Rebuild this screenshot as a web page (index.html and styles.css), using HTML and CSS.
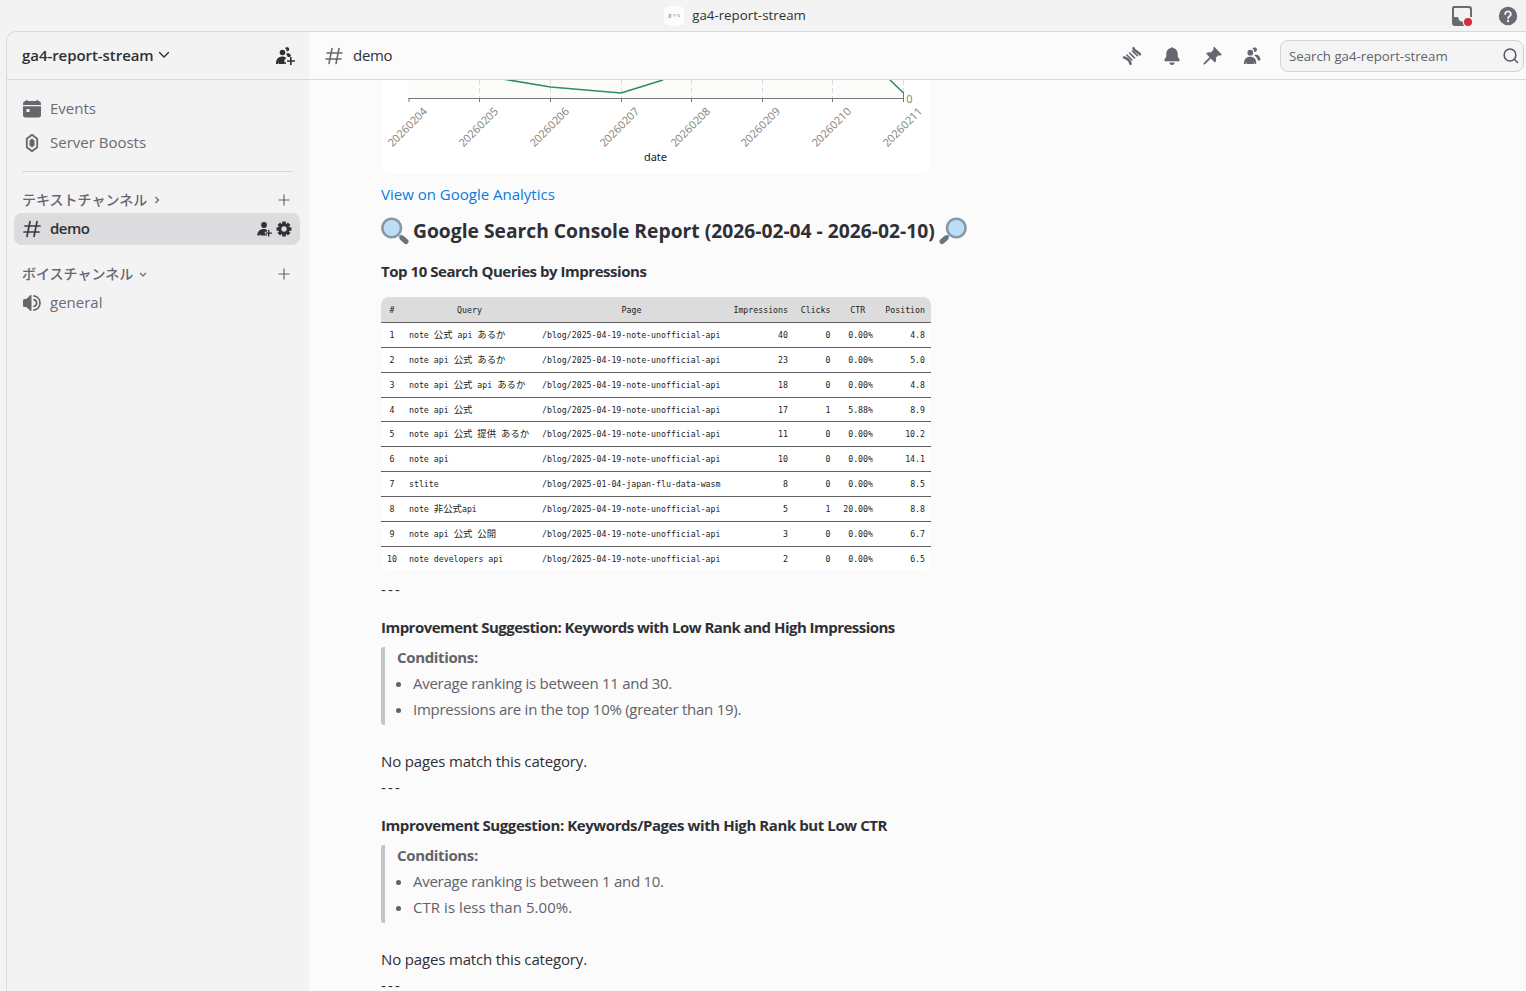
FILE: index.html
```html
<!DOCTYPE html>
<html lang="en">
<head>
  <meta charset="UTF-8">
  <meta name="viewport" content="width=device-width, initial-scale=1.0">
  <title>#demo | ga4-report-stream</title>
  <link rel="stylesheet" href="styles.css">
</head>
<body>
  <header class="titlebar">
    <div class="titlebar-name">
      <span class="guild-icon"><i>g</i>·<i>r</i>·<i>s</i></span>
      <span class="titlebar-text">ga4-report-stream</span>
    </div>
    <div class="titlebar-actions">
      <svg width="22" height="22" viewBox="0 0 22 22">
        <path d="M3 1h15a3 3 0 0 1 3 3v8h-2V4.500a1.500 1.500 0 0 0-1.500-1.500h-14a.5.5 0 0 0-.5.5V12h3.500a1 1 0 0 1 1 1c0 2 1.500 3.500 3.600 3.500.8 0 .9.600.9 1.200 0 1.300.400 2.300 1.100 3.300H4a3 3 0 0 1-3-3V3a2 2 0 0 1 2-2z" fill="#6a6a74"/>
        <circle cx="17" cy="17" r="4" fill="#d22d39"/>
      </svg>
      <svg width="20" height="20" viewBox="0 0 20 20">
        <circle cx="10" cy="10" r="9.200" fill="#6a6a74"/>
        <path d="M7.200 8a2.800 2.600 0 1 1 4.300 2.200c-.9.600-1.400 1-1.400 1.900" fill="none" stroke="#f3f3f3" stroke-width="1.900" stroke-linecap="round"/>
        <circle cx="10" cy="15" r="1.200" fill="#f3f3f3"/>
      </svg>
    </div>
  </header>

  <div class="app">
    <nav class="sidebar">
      <div class="guild-header">
        <span class="guild-name">ga4-report-stream</span>
        <svg class="guild-chevron" width="12" height="8" viewBox="0 0 12 8"><path d="M1.500 1.500 6 6l4.500-4.500" fill="none" stroke="#2f3035" stroke-width="1.400" stroke-linecap="round"/></svg>
        <svg class="guild-invite" width="20" height="20" viewBox="0 0 20 20" fill="#2f3035">
          <circle cx="7.500" cy="6.500" r="2.800"/>
          <path d="M1 17.500c0-4 2.200-7 6.200-7 1.600 0 2.700.4 3.600 1.200L11 13.200H9.500v3H11V18H9.500l-.3-1.500-.3 1.500H4l-.3-1.800-.6 1.800H1.500a.5.5 0 0 1-.5-.5z"/>
          <path d="M10 2.200c.8-1.400 4.200-1.700 4.200 1 0 1.600-1.400 2.400-2.600 2.100.2-1.200-.2-2.300-1.600-3.100zM11.200 8.300c.2-1 3.600-2 4.800 1.500l-1 1.200h-2.200c-.4-1-1-1.800-1.600-2.700z"/>
          <path d="M15 11h1.600v3.200H20v1.600h-3.400V19H15v-3.200h-3v-1.600h3z"/>
        </svg>
      </div>

      <div class="channel">
        <svg width="20" height="20" viewBox="0 0 20 20" fill="#66666f">
          <path d="M1 6V5a3 3 0 0 1 3-3V1.500a.8.8 0 0 1 1.600 0V2h8.800v-.5a.8.8 0 0 1 1.600 0V2a3 3 0 0 1 3 3v1z"/>
          <path fill-rule="evenodd" d="M1 7.200h18V16a2.500 2.500 0 0 1-2.500 2.500h-13A2.500 2.500 0 0 1 1 16zM4.500 10v3h3v-3z"/>
        </svg>
        <span>Events</span>
      </div>
      <div class="channel">
        <svg width="20" height="20" viewBox="0 0 20 20">
          <path d="m10 1.800 5.200 4v8.400l-5.200 4-5.200-4V5.800z" fill="none" stroke="#66666f" stroke-width="1.800" stroke-linejoin="round"/>
          <path d="m10 5.400 2.500 2v5.200l-2.500 2-2.500-2V7.400z" fill="#66666f"/>
        </svg>
        <span>Server Boosts</span>
      </div>

      <div class="divider"></div>

      <div class="category">
        <span>テキストチャンネル</span>
        <svg width="8" height="10" viewBox="0 0 8 10"><path d="M2.500 2 5.500 5l-3 3" fill="none" stroke="#66666f" stroke-width="1.200"/></svg>
        <svg class="add" width="12" height="12" viewBox="0 0 12 12"><path d="M6 .5v11M.5 6h11" stroke="#66666f" stroke-width="1.200"/></svg>
      </div>
      <div class="channel selected">
        <svg width="20" height="20" viewBox="0 0 20 20"><path d="M8 2.500 5 17.500M15 2.500l-3 15M3 7h15M2 13h15" fill="none" stroke="#3a3a40" stroke-width="1.700" stroke-linecap="round"/></svg>
        <span>demo</span>
        <div class="channel-actions">
          <svg width="16" height="16" viewBox="0 0 16 16" fill="#2f3035">
            <circle cx="8" cy="4" r="2.900"/>
            <path d="M1.300 14.500C1.300 10.500 4 8 8 8c1.200 0 2.200.2 3 .700v2.100H8.800v2.400H11v1.300H4.500l-.4-1.800-.6 1.800z"/>
            <path d="M12 9h1.400v2.500H16v1.300h-2.600v2.600H12v-2.600H9.500v-1.300H12z"/>
          </svg>
          <svg width="16" height="16" viewBox="0 0 16 16">
            <circle cx="8" cy="8" r="4.200" fill="none" stroke="#2f3035" stroke-width="3"/>
            <g stroke="#2f3035" stroke-width="3.600"><path d="M8 .6v2.500M8 12.900v2.500M.6 8h2.500M12.900 8h2.500M2.800 2.800l1.700 1.700M11.500 11.500l1.700 1.700M2.800 13.200l1.700-1.700M11.500 4.500l1.700-1.700"/></g>
          </svg>
        </div>
      </div>

      <div class="category voice">
        <span>ボイスチャンネル</span>
        <svg width="8" height="10" viewBox="0 0 8 10"><path d="M1 4l3 3 3-3" fill="none" stroke="#66666f" stroke-width="1.200"/></svg>
        <svg class="add" width="12" height="12" viewBox="0 0 12 12"><path d="M6 .5v11M.5 6h11" stroke="#66666f" stroke-width="1.200"/></svg>
      </div>
      <div class="channel">
        <svg width="20" height="20" viewBox="0 0 20 20">
          <path d="M9.500 2.500v15a.6.600 0 0 1-1 .4L4.300 14H2.500A1.500 1.500 0 0 1 1 12.500v-5A1.500 1.500 0 0 1 2.500 6h1.800l4.200-3.900a.6.600 0 0 1 1 .4z" fill="#66666f"/>
          <path d="M12 2.900a7.200 7.200 0 0 1 0 14.200M12 6.600a3.500 3.500 0 0 1 0 6.800" fill="none" stroke="#66666f" stroke-width="1.700" stroke-linecap="round"/>
        </svg>
        <span>general</span>
      </div>
    </nav>

    <main class="chat">
      <div class="chat-header">
        <svg width="20" height="20" viewBox="0 0 20 20"><path d="M8 2.500 5 17.500M15 2.500l-3 15M3 7h15M2 13h15" fill="none" stroke="#66666f" stroke-width="1.500" stroke-linecap="round"/></svg>
        <span class="chat-title">demo</span>
        <div class="toolbar">
          <!-- threads -->
          <svg width="20" height="20" viewBox="0 0 20 20" fill="none" stroke="#66666f" stroke-linecap="round">
            <path d="M11.500 2.200c.3 1.500 1 2 2.300 2.900 1.500 1 2.700 1.600 4.200 3.200M2 11.500c1.700.2 2.700 1.100 4 2 1.400 1 2.200 2 2.500 4.300" stroke-width="2.600"/>
            <path d="M10.300 5l5 4.600M7.500 7l5 4.900M4.800 9l5 4.900" stroke-width="1.600"/>
          </svg>
          <!-- notifications -->
          <svg width="20" height="20" viewBox="0 0 20 20" fill="#66666f">
            <path d="M10 1.200c.6 0 1 .4 1.200.9 2.800.6 4.500 2.800 4.500 5.700v2.400c0 1.600 2 2.600 2 4 0 .6-.5 1-1.200 1h-13c-.7 0-1.200-.4-1.200-1 0-1.400 2-2.400 2-4V7.800c0-2.900 1.700-5.100 4.500-5.700.2-.5.600-.9 1.200-.9zM7.400 16.500h5.200a2.600 2.400 0 0 1-5.200 0z"/>
          </svg>
          <!-- pinned -->
          <svg width="20" height="20" viewBox="0 0 20 20" fill="#66666f">
            <path d="m12.300.8 7.400 7.700-.7.900c-1.100.2-1.900.1-2.600-.2l-2.600 2.600c.6 2 .3 3.500-.8 4.700l-4.300-4.100-5.100 5.400-1.600.9-.6-.6.800-1.600 5.300-5.200-3.400-3.900c1.500-1.200 3-1.500 4.700-1l2.700-2.600c-.3-1-.1-2 .2-2.700z"/>
          </svg>
          <!-- members -->
          <svg width="20" height="20" viewBox="0 0 20 20" fill="#66666f">
            <circle cx="8.300" cy="6.700" r="2.900"/>
            <path d="M2 17.500C2 13.300 4.300 10.700 8.300 10.700s6 2.600 6 6.800c0 .3-.2.5-.5.5h-.7l-.6-2-.3 2H4.600l-.4-2-.6 2h-1a.5.5 0 0 1-.6-.5zM10.400 2.600c.8-1.600 4.600-1.800 4.600 1 0 1.900-1.500 2.600-2.900 2.300.2-1.400-.4-2.500-1.700-3.300zM12.200 9.300c3.500-1.500 6.200.9 6.200 4.500 0 .4-.2.700-.6.700h-1.900c-.6-2.400-2-3.800-3.700-5.200z"/>
          </svg>
        </div>
        <div class="search">
          <span>Search ga4-report-stream</span>
          <svg width="18" height="18" viewBox="0 0 18 18" fill="none" stroke="#55555e" stroke-width="1.500" stroke-linecap="round"><circle cx="8" cy="8" r="5.900"/><path d="m12.300 12.300 3.200 3.200"/></svg>
        </div>
      </div>

      <div class="messages">
        <svg class="chart" width="550" height="94" viewBox="0 0 550 94">
          <path d="M28 0h494v18.500H28z" fill="#fcfdfb"/>
          <g class="grid-lines"><path d="M98.500 0v18M169.500 0v18M240.500 0v18M310.500 0v18M381.500 0v18M451.500 0v18M522.500 0v18"/></g>
          <path d="M98-5 169.500 7 240 13 282 0 M509 0 522.500 13" fill="none" stroke="#2f8c63" stroke-width="1.600" stroke-linejoin="round"/>
          <path d="M27.500 18.500h495M28 18v4M98.500 18v4M169.500 18v4M240.500 18v4M310.500 18v4M381.500 18v4M451.500 18v4M522.500 12v10" stroke="#777" fill="none"/>
          <g class="ticks">
            <text transform="translate(47 32) rotate(-45)">20260204</text>
            <text transform="translate(118 32) rotate(-45)">20260205</text>
            <text transform="translate(189 32) rotate(-45)">20260206</text>
            <text transform="translate(259 32) rotate(-45)">20260207</text>
            <text transform="translate(330 32) rotate(-45)">20260208</text>
            <text transform="translate(400 32) rotate(-45)">20260209</text>
            <text transform="translate(471 32) rotate(-45)">20260210</text>
            <text transform="translate(542 32) rotate(-45)">20260211</text>
            <text x="531.500" y="23">0</text>
          </g>
          <text class="axis-title" x="274.500" y="81">date</text>
        </svg>

        <p class="link"><a href="#">View on Google Analytics</a></p>

        <h2>
          <svg width="28" height="28" viewBox="0 0 28 28"><path d="m18.500 18.500 2 2" stroke="#8899a6" stroke-width="3"/><path d="m21 21 4 3.500" stroke="#66757f" stroke-width="5" stroke-linecap="round"/><circle cx="10.700" cy="11" r="9.300" fill="#bbddf5" stroke="#8899a6" stroke-width="2.600"/></svg>
          <span>Google Search Console Report (2026-02-04 - 2026-02-10)</span>
          <svg width="28" height="28" viewBox="0 0 28 28"><path d="m9.500 18.500-2 2" stroke="#8899a6" stroke-width="3"/><path d="m7 21-4 3.500" stroke="#66757f" stroke-width="5" stroke-linecap="round"/><circle cx="17.300" cy="11" r="9.300" fill="#bbddf5" stroke="#8899a6" stroke-width="2.600"/></svg>
        </h2>

        <h3 class="top-queries">Top 10 Search Queries by Impressions</h3>

        <div class="report">
          <div class="row head"><span>#</span><span>Query</span><span>Page</span><span>Impressions</span><span>Clicks</span><span>CTR</span><span>Position</span></div>
          <div class="row"><span>1</span><span>note <b>公式</b> api <b>あるか</b></span><span>/blog/2025-04-19-note-unofficial-api</span><span>40</span><span>0</span><span>0.00%</span><span>4.8</span></div>
          <div class="row"><span>2</span><span>note api <b>公式</b> <b>あるか</b></span><span>/blog/2025-04-19-note-unofficial-api</span><span>23</span><span>0</span><span>0.00%</span><span>5.0</span></div>
          <div class="row"><span>3</span><span>note api <b>公式</b> api <b>あるか</b></span><span>/blog/2025-04-19-note-unofficial-api</span><span>18</span><span>0</span><span>0.00%</span><span>4.8</span></div>
          <div class="row"><span>4</span><span>note api <b>公式</b></span><span>/blog/2025-04-19-note-unofficial-api</span><span>17</span><span>1</span><span>5.88%</span><span>8.9</span></div>
          <div class="row"><span>5</span><span>note api <b>公式</b> <b>提供</b> <b>あるか</b></span><span>/blog/2025-04-19-note-unofficial-api</span><span>11</span><span>0</span><span>0.00%</span><span>10.2</span></div>
          <div class="row"><span>6</span><span>note api</span><span>/blog/2025-04-19-note-unofficial-api</span><span>10</span><span>0</span><span>0.00%</span><span>14.1</span></div>
          <div class="row"><span>7</span><span>stlite</span><span>/blog/2025-01-04-japan-flu-data-wasm</span><span>8</span><span>0</span><span>0.00%</span><span>8.5</span></div>
          <div class="row"><span>8</span><span>note <b>非公式</b>api</span><span>/blog/2025-04-19-note-unofficial-api</span><span>5</span><span>1</span><span>20.00%</span><span>8.8</span></div>
          <div class="row"><span>9</span><span>note api <b>公式</b> <b>公開</b></span><span>/blog/2025-04-19-note-unofficial-api</span><span>3</span><span>0</span><span>0.00%</span><span>6.7</span></div>
          <div class="row"><span>10</span><span>note developers api</span><span>/blog/2025-04-19-note-unofficial-api</span><span>2</span><span>0</span><span>0.00%</span><span>6.5</span></div>
        </div>

        <p class="dashes">---</p>
        <h3>Improvement Suggestion: Keywords with Low Rank and High Impressions</h3>
        <blockquote>
          <strong>Conditions:</strong>
          <ul>
            <li>Average ranking is between 11 and 30.</li>
            <li>Impressions are in the top 10% (greater than 19).</li>
          </ul>
        </blockquote>
        <p>No pages match this category.</p>
        <p class="dashes">---</p>
        <h3 class="low-ctr">Improvement Suggestion: Keywords/Pages with High Rank but Low CTR</h3>
        <blockquote>
          <strong>Conditions:</strong>
          <ul>
            <li>Average ranking is between 1 and 10.</li>
            <li class="ctr-limit">CTR is less than 5.00%.</li>
          </ul>
        </blockquote>
        <p>No pages match this category.</p>
        <p class="dashes">---</p>
      </div>
    </main>
  </div>
</body>
</html>
```
FILE: styles.css
```css
* {
  box-sizing: border-box;
}
body {
  margin: 0;
  height: 100vh;
  overflow: hidden;
  display: flex;
  flex-direction: column;
  background: #f3f3f3;
  color: #2f3035;
  font-family: "Open Sans", "Noto Sans CJK JP", sans-serif;
  font-size: 15px;
}
svg {
  display: block;
  flex: none;
}

/* Title bar */
.titlebar {
  height: 31px;
  flex: none;
  display: grid;
  grid-template-columns: 1fr auto 1fr;
  align-items: center;
  padding: 0 8px 0 0;
}
.titlebar-name {
  grid-column: 2;
  display: flex;
  align-items: center;
  gap: 8px;
  margin-left: -48px;
}
.guild-icon {
  width: 20px;
  height: 20px;
  border-radius: 5px;
  background: #fcfcfc;
  color: #888;
  font-size: 6px;
  line-height: 19px;
  text-align: center;
}
.guild-icon i {
  font-style: normal;
}
.titlebar-text {
  padding-bottom: 2px;
  font-size: 13.3px;
  font-weight: 500;
}
.titlebar-actions {
  justify-self: end;
  display: flex;
  align-items: center;
  gap: 25px;
}

.app {
  flex: 1;
  min-height: 0;
  margin-left: 6px;
  display: flex;
  border: 1px solid #d9d9da;
  border-width: 1px 0 0 1px;
  border-radius: 10px 0 0 0;
  overflow: hidden;
}

/* Sidebar */
.sidebar {
  width: 302px;
  flex: none;
}
.guild-header {
  height: 48px;
  display: flex;
  align-items: center;
  padding: 0 14px 0 15px;
  border-bottom: 1px solid #d9d9da;
  margin-bottom: 13px;
}
.guild-name {
  padding-bottom: 2px;
  font-weight: 600;
  letter-spacing: -0.06px;
}
.guild-chevron {
  margin: 0 0 2px 4px;
}
.guild-invite {
  margin-left: auto;
}
.channel {
  height: 32px;
  margin: 0 9px 2px 7px;
  padding: 0 8px;
  display: flex;
  align-items: center;
  gap: 8px;
  border-radius: 8px;
  color: #6b6b75;
  font-weight: 500;
}
.channel span {
  padding-bottom: 2px;
}
.channel.selected {
  background: #dcdcdf;
  color: #2f3035;
  font-weight: 600;
  letter-spacing: -0.5px;
  margin-bottom: 0;
}
.channel-actions {
  display: flex;
  gap: 4px;
  margin-left: auto;
}
.divider {
  height: 1px;
  margin: 12px 16px 15px 15px;
  background: #d9d9da;
}
.category {
  display: flex;
  align-items: center;
  height: 26px;
  padding: 0 19px 0 15px;
  gap: 6px;
  color: #66666f;
  font-size: 14px;
  font-weight: 500;
}
.category span {
  padding-bottom: 2px;
}
.category .add {
  margin-left: auto;
}
.category.voice {
  margin-top: 16px;
}

/* Chat */
.chat {
  flex: 1;
  min-width: 0;
  display: flex;
  flex-direction: column;
  background: #fbfbfb;
}
.chat-header {
  height: 48px;
  flex: none;
  display: flex;
  align-items: center;
  padding: 0 2px 0 15px;
  border-bottom: 1px solid #d9d9da;
}
.chat-title {
  margin-left: 9px;
  padding-bottom: 2px;
  font-weight: 500;
  letter-spacing: -0.3px;
}
.toolbar {
  display: flex;
  gap: 20px;
  margin: 0 18px 0 auto;
}
.search {
  width: 244px;
  height: 32px;
  display: flex;
  align-items: center;
  justify-content: space-between;
  padding: 0 3px 0 8px;
  border: 1px solid #d3d3d5;
  border-radius: 8px;
  background: #f4f4f5;
  color: #62626b;
  font-size: 13.25px;
}

.messages {
  flex: 1;
  min-height: 0;
  overflow: hidden;
  padding-left: 72px;
  line-height: 26px;
}
.messages p {
  margin: 0;
  letter-spacing: -0.16px;
}
.messages .dashes {
  letter-spacing: 2.2px;
}
.chart {
  background: #fff;
  border-radius: 0 0 8px 8px;
  font-family: "Noto Sans", sans-serif;
  font-size: 11px;
}
.grid-lines {
  stroke: #ddd;
  stroke-dasharray: 5 3;
}
.ticks {
  fill: #888880;
  text-anchor: end;
}
.axis-title {
  fill: #222;
  text-anchor: middle;
}
.messages .link {
  margin-top: 7px;
  letter-spacing: 0;
}
.link a {
  color: #0a7be0;
  text-decoration: none;
}
h2 {
  display: flex;
  gap: 4px;
  margin: 10px 0 15px;
  font-size: 19.25px;
  font-weight: 700;
  line-height: 28px;
}
h3 {
  margin: 14px 0 9px;
  font-size: 15px;
  font-weight: 700;
  line-height: 22px;
  letter-spacing: -0.53px;
}
h3.top-queries {
  margin-bottom: 15px;
  letter-spacing: -0.46px;
}
h3.low-ctr {
  letter-spacing: -0.42px;
}

/* Query report */
.report {
  width: 550px;
  height: 273px;
  margin-bottom: 6px;
  border-radius: 8px;
  overflow: hidden;
  background: #fff;
  color: #222;
  font-family: "DejaVu Sans Mono", monospace;
  font-size: 8.24px;
}
.row {
  display: grid;
  grid-template-columns: 22px 133px 191px 67px 42.5px 42.5px 52px;
  height: 24.85px;
  line-height: 24px;
  border-top: 1px solid #606060;
  white-space: pre;
}
.row span {
  padding: 0 6px;
  text-align: right;
}
.row span:nth-child(1) {
  padding: 0;
  text-align: center;
}
.row span:nth-child(2),
.row span:nth-child(3) {
  text-align: left;
}
.row b {
  font-family: "Noto Sans CJK JP", sans-serif;
  font-size: 9.4px;
  font-weight: 400;
  line-height: 1;
}
.row.head {
  height: 25px;
  line-height: 26px;
  background: #dcdcdc;
  border-top: 0;
}
.row.head span:nth-child(2),
.row.head span:nth-child(3),
.row.head span:nth-child(6) {
  text-align: center;
}

blockquote {
  display: flow-root;
  height: 78px;
  margin: 0 0 23px;
  padding-left: 12px;
  border-left: 4px solid #c4c4c8;
  border-radius: 3px;
  color: #62626b;
  letter-spacing: -0.27px;
}
blockquote strong {
  display: block;
  margin-top: -3px;
  font-weight: 700;
  letter-spacing: -0.35px;
}
blockquote ul {
  margin: 0;
  padding-left: 16px;
}
.ctr-limit {
  letter-spacing: 0.05px;
}
```
